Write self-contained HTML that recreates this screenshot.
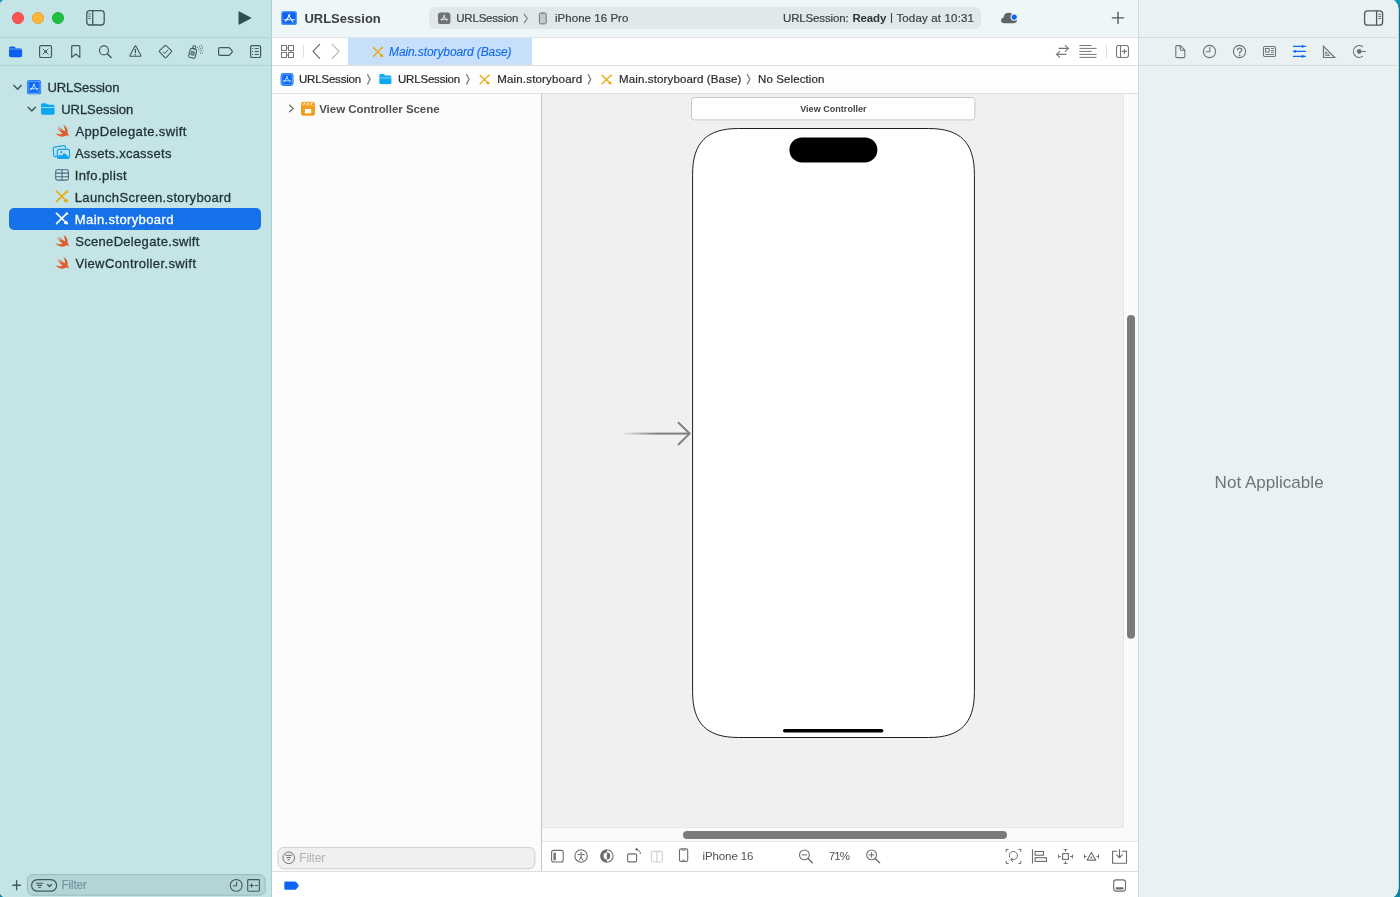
<!DOCTYPE html>
<html>
<head>
<meta charset="utf-8">
<title>Xcode</title>
<style>
html,body{margin:0;padding:0;}
html{width:1400px;height:897px;overflow:hidden;}
body{width:1400px;height:897px;overflow:hidden;background:linear-gradient(180deg,#0a9cbd 0,#07728f 16px,#07728f 880px,#0a8aa8 897px);font-family:"Liberation Sans",sans-serif;font-size:13px;color:#1f2d2f;position:relative;}
.abs{position:absolute;}
#clip{position:absolute;left:0;top:0;width:1398.5px;height:897px;overflow:hidden;clip-path:inset(-1.5px 0px -1.5px -1.5px round 10.5px);}
#win{position:absolute;left:0;top:0;width:1400px;height:897px;background:#fff;}
#win > div{position:absolute;}
.t{position:absolute;white-space:nowrap;line-height:16px;height:16px;}
svg{position:absolute;overflow:visible;}
#sidebar{left:0;top:0;width:271px;height:897px;background:#c5e4e6;}
#sbline{left:271px;top:0;width:1px;height:897px;background:#a9cfd2;}
#toolbar{left:272px;top:0;width:866px;height:37px;background:#eef6f8;}
#tbline{left:0;top:37px;width:1400px;height:1px;background:#d3dcde;}
#tbline2{left:272px;top:37px;width:866px;height:1px;background:#e3e3e3;}
#tabline2{left:272px;top:65px;width:866px;height:1px;background:#e1e1e1;}
#sbl1{left:0;top:37px;width:271px;height:1px;background:#b3d3d6;}
#sbl2{left:0;top:65px;width:271px;height:1px;background:#b3d3d6;}
#tabbar{left:272px;top:38px;width:866px;height:27px;background:#fff;}
#tabline{left:272px;top:65px;width:1127px;height:1px;background:#d6dee0;}
#jumpbar{left:272px;top:66px;width:866px;height:27px;background:#fdfdfd;}
#jumpline{left:272px;top:93px;width:866px;height:1px;background:#e0e0e0;}
#outline{left:272px;top:94px;width:269px;height:777px;background:#fcfcfc;}
#outlineline{left:541px;top:94px;width:1px;height:777px;background:#c4c4c4;}
#canvas{left:542px;top:94px;width:581px;height:733px;background:#f0f0f0;}
#vline{left:1123px;top:94px;width:1px;height:734px;background:#e6e6e6;}
#hline{left:542px;top:827px;width:582px;height:1px;background:#e6e6e6;}
#vtrack{left:1124px;top:94px;width:14px;height:747px;background:#fafafa;}
#htrack{left:542px;top:828px;width:596px;height:13px;background:#fafafa;}
#hline2{left:542px;top:841px;width:596px;height:1px;background:#e4e4e4;}
#canvasbar{left:542px;top:842px;width:596px;height:29px;background:#fff;}
#botline{left:272px;top:871px;width:866px;height:1px;background:#dedede;}
#botbar{left:272px;top:872px;width:866px;height:25px;background:#fff;}
#inspline{left:1138px;top:0;width:1px;height:897px;background:#d0dadc;}
#insp{left:1139px;top:0;width:261px;height:897px;background:#e9f1f3;}
#ov{left:0;top:0;will-change:transform;}
text{font-family:"Liberation Sans",sans-serif;}
</style>
</head>
<body>
<div id="clip"><div id="win">
  <div id="sidebar"></div>
  <div id="sbline"></div>
  <div id="toolbar"></div>
  <div id="tabbar"></div>
  <div id="jumpbar"></div>
  <div id="outline"></div>
  <div id="outlineline"></div>
  <div id="canvas"></div>
  <div id="vtrack"></div>
  <div id="htrack"></div>
  <div id="vline"></div>
  <div id="hline"></div>
  <div id="hline2"></div>
  <div id="canvasbar"></div>
  <div id="botbar"></div>
  <div id="insp"></div>
  <div id="inspline"></div>
  <div id="tbline"></div>
  <div id="tbline2"></div>
  <div id="sbl1"></div>
  <div id="sbl2"></div>
  <div id="tabline"></div>
  <div id="tabline2"></div>
  <div id="jumpline"></div>
  <div id="botline"></div>
  <svg id="ov" width="1400" height="897" viewBox="0 0 1400 897">
  <defs>
    <!-- app icon (blue) 15x15 -->
  <symbol id="appicon" viewBox="0 0 15 15">
    <rect x="0.1" y="0.1" width="14.8" height="14.8" rx="3.2" fill="#0b6df4"/>
    <rect x="1.3" y="1.3" width="12.4" height="12.4" rx="2.1" fill="none" stroke="#a8cdfc" stroke-width="0.72"/>
    <g stroke="#dcebfe" stroke-width="0.95" stroke-linecap="round" fill="none">
      <path d="M7.9 3.9l-3.7 6.5M6.9 4.6l3.7 6M3.3 9h4.6M9.8 9h1.9"/>
    </g>
  </symbol>
  <symbol id="appicon2" viewBox="0 0 16 14.2">
    <rect x="0.1" y="0.1" width="15.8" height="14" rx="2.6" fill="#4a92f6"/>
    <rect x="1.5" y="1.5" width="13" height="11.2" rx="1.6" fill="#0b61f0"/>
    <g stroke="#fff" stroke-width="1.05" stroke-linecap="round" fill="none">
      <path d="M8.8 3.5l-3 5.2M4.6 10.6l0.5-0.8M7.4 4.1l4.3 7M3.2 8.8h5.6M11 8.8h2.3"/>
    </g>
  </symbol>
  <!-- folder light blue 14x12 -->
  <symbol id="folder" viewBox="0 0 14 12">
    <path d="M0 1.8 Q0 0.1 1.7 0.1 L4.3 0.1 Q5.2 0.1 5.8 0.7 L6.4 1.3 Q6.9 1.8 7.8 1.8 L12.2 1.8 Q13.9 1.8 13.9 3.5 L13.9 10.2 Q13.9 11.9 12.2 11.9 L1.7 11.9 Q0 11.9 0 10.2Z" fill="#0aa8f1"/>
    <path d="M0 4.5h13.9" stroke="#c4e9f6" stroke-width="0.8"/>
  </symbol>
  <!-- swift 14x12 -->
  <symbol id="swift" viewBox="0 0 14 12">
    <path d="M7.7 0.1 C11 1.9 12.8 5.2 11.8 7.9 C12.6 9.1 13.6 10.6 13.3 11.9 C12.6 10.7 11.5 10.4 10.7 10.8 C8.9 11.9 6.3 12.2 3.9 11.2 C2.2 10.5 0.9 9.3 0.1 7.9 C2.2 9.4 4.9 9.9 7.1 8.9 C4.9 7.2 3.1 4.9 1.6 2.6 C3.3 4.1 5.3 5.5 6.9 6.5 C5.4 4.9 4 3 2.9 1.3 C5 3.2 7.3 5.2 9.5 6.7 C9.7 4.8 9 2.3 7.7 0.1Z" fill="#df5b29"/>
  </symbol>
  <!-- storyboard 13x12.5 -->
  <symbol id="sb" viewBox="0 0 13 12.5">
    <g stroke="currentColor" stroke-linecap="round" fill="none">
      <path d="M0.9 1l7.6 7.3" stroke-width="1.7"/>
      <path d="M11.5 1.2l-10.4 10.2" stroke-width="1.7"/>
      <path d="M11.2 0.7l1.1 1.1" stroke-width="1.5"/>
    </g>
    <path d="M0.3 12.3l0.6-1.9l1.3 1.3z" fill="currentColor"/>
    <path d="M8.6 9.6 Q9.4 8.2 10.8 8.6 Q12.6 9.4 12.8 12 Q10.4 12.6 9 11.6 Q8 10.8 8.6 9.6Z" fill="currentColor"/>
  </symbol>
<!--DEFS-->
  </defs>
    <g id="sidebar-g">
  <!-- traffic lights -->
  <circle cx="18" cy="18" r="5.6" fill="#ff5451" stroke="#e4403c" stroke-width="0.8"/>
  <circle cx="38" cy="18" r="5.6" fill="#feb53a" stroke="#e09e27" stroke-width="0.8"/>
  <circle cx="58" cy="18" r="5.6" fill="#1dc040" stroke="#17a834" stroke-width="0.8"/>
  <!-- sidebar toggle -->
  <g fill="none" stroke="#3e5a5d" stroke-width="1.3">
    <rect x="86.8" y="10.7" width="17.4" height="14.3" rx="3"/>
    <path d="M92.7 10.7v14.3"/>
    <path d="M88.3 13.9h2.4M88.3 16.2h2.4M88.3 18.5h2.4" stroke-width="0.9"/>
  </g>
  <!-- play -->
  <path d="M239.5 11.4 L250.9 17.5 Q251.7 18 250.9 18.5 L239.5 24.6 Q238.5 25 238.5 24 L238.5 12 Q238.5 11 239.5 11.4Z" fill="#2f4f52"/>
  <!-- nav icons -->
  <path d="M9 48.3 Q9 46.6 10.7 46.6 L13.6 46.6 Q14.5 46.6 15.1 47.2 L15.6 47.7 Q16.1 48.2 17 48.2 L20.4 48.2 Q22.1 48.2 22.1 49.9 L22.1 55.6 Q22.1 57.3 20.4 57.3 L10.7 57.3 Q9 57.3 9 55.6Z" fill="#0b60f2"/>
  <path d="M9 49h13.1" stroke="#c5e4e6" stroke-width="0.7" opacity="0.7"/>
  <g fill="none" stroke="#3e5a5d" stroke-width="1.2" stroke-linecap="round" stroke-linejoin="round">
    <rect x="39.6" y="45.6" width="11.9" height="11.9" rx="1.6"/>
    <path d="M42.9 48.9l5.4 5.4M48.3 48.9l-5.4 5.4" stroke-width="0.85"/>
    <path d="M71.7 46.6 Q71.7 45.6 72.7 45.6 L78.8 45.6 Q79.8 45.6 79.8 46.6 L79.8 57.4 L75.75 54 L71.7 57.4Z"/>
    <circle cx="104" cy="50.4" r="4.5"/>
    <path d="M107.3 53.8l3.7 3.7" stroke-width="1.5"/>
    <path d="M134.8 46.4 Q135.4 45.4 136 46.4 L140.8 55.2 Q141.3 56.3 140.1 56.3 L130.7 56.3 Q129.5 56.3 130 55.2Z" stroke-width="1.1"/>
    <path d="M135.4 49.3v3.4" stroke-width="1.2"/>
    <path d="M159.6 51.5 Q159 50.9 159.6 50.3 L164.9 45.3 Q165.5 44.8 166.1 45.3 L171.4 50.3 Q172 50.9 171.4 51.5 L166.1 57.4 Q165.5 58 164.9 57.4Z" transform="translate(0,0.3)" stroke-width="1.05"/>
    <path d="M163.2 51.9l1.6 1.5l3-3.3" stroke-width="1"/>
    <path d="M219.8 47.6 L228.6 47.6 Q229.3 47.6 229.8 48.1 L232.1 50.8 Q232.6 51.5 232.1 52.2 L229.8 54.9 Q229.3 55.4 228.6 55.4 L219.8 55.4 Q218.6 55.4 218.6 54.2 L218.6 48.8 Q218.6 47.6 219.8 47.6Z"/>
    <rect x="250.6" y="45.6" width="10" height="11.9" rx="1.6"/>
    <path d="M254.6 48.6h4.2M254.6 51.5h4.2M254.6 54.4h4.2" stroke-width="1" stroke-linecap="butt"/>
  </g>
  <circle cx="45.6" cy="51.6" r="1.4" fill="#3e5a5d"/>
  <circle cx="135.4" cy="54.7" r="0.75" fill="#3e5a5d"/>
  <g fill="#3e5a5d"><circle cx="252.6" cy="48.6" r="0.6"/><circle cx="252.6" cy="51.5" r="0.6"/><circle cx="252.6" cy="54.4" r="0.6"/></g>
  <!-- spray (debug) -->
  <g transform="translate(0.6,-0.6) rotate(14 192 53)" fill="none" stroke="#3e5a5d" stroke-width="1.05" stroke-linejoin="round">
    <path d="M189 51.2 Q189 49.4 190.6 49.2 L194 49.2 Q195.6 49.4 195.6 51.2 L195.6 57.2 Q195.6 58.4 194.4 58.4 L190.2 58.4 Q189 58.4 189 57.2Z"/>
    <rect x="191" y="46.2" width="2.6" height="3" rx="0.5" stroke-width="0.95"/>
    <rect x="190.7" y="52.2" width="3.2" height="3.4" stroke-width="0.7" fill="#3e5a5d" fill-opacity="0.55"/>
  </g>
  <g fill="#3e5a5d"><circle cx="197.5" cy="47.5" r="0.55"/><circle cx="199.4" cy="46.4" r="0.55"/><circle cx="201.5" cy="45.6" r="0.55"/><circle cx="198.6" cy="49" r="0.55"/><circle cx="200.5" cy="48.3" r="0.55"/><circle cx="202.4" cy="47.9" r="0.55"/><circle cx="200.1" cy="50.7" r="0.55"/><circle cx="201.8" cy="50.1" r="0.55"/><circle cx="200.5" cy="53.1" r="0.55"/><circle cx="202.4" cy="52.7" r="0.55"/></g>
  <!-- tree chevrons -->
  <g fill="none" stroke="#3e5a5d" stroke-width="1.5" stroke-linecap="round" stroke-linejoin="round">
    <path d="M14 85.4l3.6 3.8l3.6-3.8"/>
    <path d="M28.2 107.2l3.6 3.8l3.6-3.8"/>
  </g>
  <!-- selection -->
  <rect x="9" y="208" width="252" height="22" rx="5" fill="#1672eb"/>
  <!-- bottom filter -->
  <rect x="27.4" y="874.6" width="237.8" height="20.6" rx="5.5" fill="#b5d4d7" stroke="#94b8bc" stroke-width="0.9"/>
  <g fill="none" stroke="#3e5a5d" stroke-width="1.2" stroke-linecap="round">
    <path d="M12.8 885.2h7.7M16.6 880.7v9.1" stroke-width="1.35"/>
    <rect x="31.6" y="879.6" width="25" height="11.6" rx="5.8" stroke-width="1.2"/>
    <path d="M36.3 883.2h6.6M37.6 885.4h4M38.8 887.5h1.7" stroke-width="1.15"/>
    <path d="M47.5 884.5l2 2l2-2" stroke-width="1.25"/>
    <circle cx="236.2" cy="885.4" r="5.9" stroke-width="1.05"/>
    <path d="M236.6 881.9v3.8h-3.2" stroke-width="1.05"/>
    <rect x="247.7" y="879.6" width="11.7" height="11.6" rx="0.9" stroke-width="1.1"/>
    <path d="M249.6 885.5h4M251.6 883.5v4M254.8 885.5h3" stroke-width="1.15" stroke-linecap="butt"/>
  </g>
  <text x="61.5" y="889.3" font-size="12" fill="#729a9f" stroke="#729a9f" stroke-width="0.2" textLength="25.5">Filter</text>
  <!-- tree text -->
  <g font-size="13" fill="#1f3134" stroke="#1f3134" stroke-width="0.3">
    <text x="47.4" y="91.5" textLength="72">URLSession</text>
    <text x="61.2" y="113.5" textLength="72">URLSession</text>
    <text x="75.4" y="135.5" textLength="111">AppDelegate.swift</text>
    <text x="74.9" y="157.5" textLength="96.5">Assets.xcassets</text>
    <text x="74.7" y="179.5" textLength="52">Info.plist</text>
    <text x="74.8" y="201.5" textLength="156.2">LaunchScreen.storyboard</text>
    <text x="74.8" y="223.5" textLength="98.6" fill="#fff" stroke="#fff">Main.storyboard</text>
    <text x="75.2" y="245.5" textLength="124.2">SceneDelegate.swift</text>
    <text x="75.4" y="267.5" textLength="120.6">ViewController.swift</text>
  </g>
  </g>
  <g id="tree-icons">
    <use href="#appicon" x="26.8" y="80" width="14.6" height="14.6"/>
    <use href="#folder" x="41" y="103" width="13.8" height="11.9"/>
    <use href="#swift" x="55.3" y="124.3" width="14.3" height="12.8" preserveAspectRatio="none"/>
    <!-- assets -->
    <g fill="none" stroke="#14a4f0" stroke-width="1.2" stroke-linejoin="round">
      <path d="M56.8 156.4 L55.2 156.6 Q53.9 156.7 53.8 155.4 L53.2 148.6 Q53.1 147.3 54.4 147.1 L63.6 145.7 Q65 145.5 65.4 146.8 L65.8 148.6"/>
      <rect x="57.3" y="149.3" width="12.2" height="9.2" rx="1.8"/>
    </g>
    <path d="M57.6 156.6 L59.2 155 Q59.8 154.5 60.4 155 L61.3 155.8 L63.6 153.6 Q64.3 153 65 153.6 L69.2 157.2 L69.2 158.2 L57.6 158.2Z" fill="#14a4f0"/>
    <circle cx="61.3" cy="152.2" r="1.1" fill="#14a4f0"/>
    <!-- plist -->
    <g fill="none" stroke="#456b7b" stroke-width="1.1">
      <rect x="55.7" y="169.7" width="12.7" height="10.4" rx="1.8" fill="#cfe6ea"/>
      <path d="M55.7 173.1h12.7M55.7 176.7h12.7M62 169.7v10.4"/>
    </g>
    <use href="#sb" x="55.4" y="190.2" width="13" height="12.5" color="#e9ab14"/>
    <use href="#sb" x="55.4" y="212.2" width="13" height="12.5" color="#ffffff"/>
    <use href="#swift" x="55.3" y="234.3" width="14.3" height="12.8" preserveAspectRatio="none"/>
    <use href="#swift" x="55.3" y="256.3" width="14.3" height="12.8" preserveAspectRatio="none"/>
  </g>

    <g id="toolbar-g">
    <use href="#appicon2" x="281" y="10.9" width="16.1" height="14.2"/>
    <text x="304.4" y="22.9" font-size="13" font-weight="bold" fill="#3b3e3f" textLength="76.4">URLSession</text>
    <!-- activity pill -->
    <rect x="429" y="7" width="552" height="22" rx="6" fill="#e0e8ea"/>
    <rect x="438" y="12.4" width="12.4" height="11.6" rx="2.6" fill="#6f7374"/>
    <g stroke="#eef2f3" stroke-width="0.9" stroke-linecap="round" fill="none"><path d="M444.8 15.3l-2.9 5M443.7 15.8l3 4.8M440.9 19.3h3.8M446.2 19.3h1.4"/></g>
    <g font-size="11.5" fill="#3a4244" stroke="#3a4244" stroke-width="0.2">
      <text x="456.2" y="21.8" textLength="62.2">URLSession</text>
      <text x="555" y="21.8" textLength="73.4">iPhone 16 Pro</text>
      <text x="783" y="21.8" textLength="65.6">URLSession:</text>
      <text x="852.4" y="21.8" textLength="34" font-weight="bold" fill="#2e3436" stroke="none">Ready</text>
      <text x="890" y="21.4" textLength="3">|</text>
      <text x="896.4" y="21.8" textLength="77.6">Today at 10:31</text>
    </g>
    <path d="M524.3 14.3l3 4.2l-3 4.2" fill="none" stroke="#737a7c" stroke-width="1.15" stroke-linecap="round" stroke-linejoin="round"/>
    <!-- phone icon -->
    <rect x="539.4" y="12.9" width="6.8" height="11" rx="1.4" fill="#c3c9ca" stroke="#6f7678" stroke-width="1"/>
    <path d="M541.8 13.6h2" stroke="#6f7678" stroke-width="0.9"/>
    <!-- cloud -->
    <path d="M1004.6 23.2 Q1001 23.2 1001 20.2 Q1001 17.8 1003.6 17.4 Q1004 13 1008.6 12.8 Q1012.4 12.8 1013.6 16.2 Q1017 16.6 1017 19.8 Q1017 23.2 1013.4 23.2Z" fill="#5f6668"/>
    <circle cx="1014.2" cy="17.1" r="3.7" fill="#eef6f8"/>
    <circle cx="1014.2" cy="17.1" r="2.6" fill="#1267f0"/>
    <!-- plus -->
    <path d="M1112.4 17.9h11.2M1118 12.3v11.2" stroke="#545b5d" stroke-width="1.4" stroke-linecap="round"/>
    <!-- inspector toggle -->
    <g fill="none" stroke="#4e5759" stroke-width="1.3">
      <rect x="1364.6" y="10.8" width="18" height="14.4" rx="3"/>
      <path d="M1376.6 10.8v14.4"/>
      <path d="M1378.4 14.3h2.6M1378.4 16.4h2.6M1378.4 18.5h2.6" stroke-width="0.9"/>
    </g>
  </g>

    <g id="tabbar-g">
    <rect x="348" y="38" width="184" height="27" fill="#c8dffb"/>
    <!-- grid icon -->
    <g fill="none" stroke="#777" stroke-width="1" stroke-linejoin="miter">
      <rect x="281.5" y="45.5" width="5" height="5"/><rect x="288.5" y="45.5" width="5" height="5"/>
      <rect x="281.5" y="52.5" width="5" height="5"/><rect x="288.5" y="52.5" width="5" height="5"/>
      <path d="M286.5 48h2M291 50.5v2M286.5 55h2"/>
    </g>
    <path d="M303.4 44.8v12.6" stroke="#dcdcdc" stroke-width="1"/>
    <path d="M319.6 44.4l-6.6 7l6.6 7" fill="none" stroke="#737373" stroke-width="1.35" stroke-linecap="round" stroke-linejoin="round"/>
    <path d="M332.4 44.4l6.6 7l-6.6 7" fill="none" stroke="#b8b8b8" stroke-width="1.35" stroke-linecap="round" stroke-linejoin="round"/>
    <use href="#sb" x="372.4" y="46.4" width="11.2" height="10.8" color="#e9ab14"/>
    <text x="389" y="55.8" font-size="12" font-style="italic" fill="#0f6aee" stroke="#0f6aee" stroke-width="0.12" textLength="122.6">Main.storyboard (Base)</text>
    <!-- right icons -->
    <g fill="none" stroke="#767676" stroke-width="1.1" stroke-linecap="round" stroke-linejoin="round">
      <path d="M1059 48.4h9.4M1065.2 45.4l3.3 3l-3.3 3M1066 54.4h-9.4M1059.8 51.4l-3.3 3l3.3 3"/>
      <path d="M1079.4 45.5h12.2M1079.4 48.4h17.2M1079.4 51.4h12.2M1079.4 54.4h17.2M1079.4 57.4h17.2" stroke-width="1" stroke-linecap="butt"/>
      <rect x="1116.5" y="45.5" width="12" height="12" rx="2.4"/>
      <path d="M1120.5 45.5v12M1122.2 51.4h4.4M1124.4 49.2v4.4"/>
    </g>
    <path d="M1106.4 45v12.6" stroke="#dcdcdc" stroke-width="1"/>
  </g>

    <g id="jumpbar-g">
    <use href="#appicon" x="280.1" y="72.9" width="13.9" height="13.1" preserveAspectRatio="none"/>
    <use href="#folder" x="378.6" y="74" width="13.6" height="10.4"/>
    <use href="#sb" x="479.2" y="74.4" width="10.8" height="10.2" color="#e9ab14"/>
    <use href="#sb" x="601.2" y="74.4" width="10.8" height="10.2" color="#e9ab14"/>
    <g font-size="11.5" fill="#272b2c" stroke="#272b2c" stroke-width="0.2">
      <text x="299" y="82.8" textLength="62.2">URLSession</text>
      <text x="398" y="82.8" textLength="62.2">URLSession</text>
      <text x="497.2" y="82.8" textLength="85">Main.storyboard</text>
      <text x="619" y="82.8" textLength="122.4">Main.storyboard (Base)</text>
      <text x="758" y="82.8" textLength="66.4">No Selection</text>
    </g>
    <g fill="none" stroke="#828282" stroke-width="1.4" stroke-linecap="round" stroke-linejoin="round">
      <path d="M367.7 74.7l2.4 4.6l-2.4 4.6"/>
      <path d="M466.7 74.7l2.4 4.6l-2.4 4.6"/>
      <path d="M588.3 74.7l2.4 4.6l-2.4 4.6"/>
      <path d="M747.5 74.7l2.4 4.6l-2.4 4.6"/>
    </g>
  </g>

    <g id="outline-g">
    <path d="M289.6 105.2l3.6 3.3l-3.6 3.3" fill="none" stroke="#6c6c6c" stroke-width="1.3" stroke-linecap="round" stroke-linejoin="round"/>
    <!-- scene icon -->
    <rect x="301" y="101.8" width="14" height="14" rx="2.4" fill="#f39d1b"/>
    <path d="M302.4 104.7l2-2.2h1.7l-2 2.2zM306 104.7l2-2.2h1.7l-2 2.2zM309.6 104.7l2-2.2h1.7l-2 2.2z" fill="#fff3dd"/>
    <path d="M301 105.7h14" stroke="#f8bd62" stroke-width="0.6"/>
    <rect x="305" y="108.9" width="6.2" height="4.4" fill="#fff"/>
    <text x="319.2" y="113" font-size="11.5" font-weight="bold" fill="#515151" textLength="120.4">View Controller Scene</text>
    <!-- filter box -->
    <rect x="277.9" y="847.4" width="257" height="21.4" rx="6" fill="#f0f0f0" stroke="#cbcbcb" stroke-width="0.9"/>
    <circle cx="288.7" cy="857.8" r="5.8" fill="none" stroke="#747474" stroke-width="1"/>
    <path d="M285.7 855.3h6M286.9 857.5h3.6M288 859.7h1.4" stroke="#6e6e6e" stroke-width="1.1" stroke-linecap="round"/>
    <text x="299.2" y="862" font-size="12" fill="#b2b2b2" textLength="26">Filter</text>
    <!-- tag -->
    <path d="M285.6 881.4 L294.8 881.4 Q295.6 881.4 296.2 882 L298.4 884.8 Q298.9 885.6 298.4 886.4 L296.2 889.2 Q295.6 889.8 294.8 889.8 L285.6 889.8 Q284.3 889.8 284.3 888.5 L284.3 882.7 Q284.3 881.4 285.6 881.4Z" fill="#0b65f2"/>
    <!-- bottom-right panel icon -->
    <rect x="1113.7" y="879.9" width="11.8" height="11.2" rx="2.4" fill="none" stroke="#6c6c6c" stroke-width="1.1"/>
    <rect x="1115.6" y="887.2" width="8" height="2.2" rx="0.8" fill="#6c6c6c"/>
  </g>

    <g id="canvas-g">
    <linearGradient id="arrg" x1="621" y1="0" x2="656" y2="0" gradientUnits="userSpaceOnUse">
      <stop offset="0" stop-color="#808080" stop-opacity="0"/>
      <stop offset="1" stop-color="#808080" stop-opacity="1"/>
    </linearGradient>
    <rect x="691.5" y="97.5" width="283.4" height="22.4" rx="3" fill="#fff" stroke="#c6c6c6" stroke-width="1"/>
    <text x="800.2" y="112" font-size="9" font-weight="bold" fill="#434343" textLength="66.4">View Controller</text>
    <!-- phone -->
    <path d="M738.6 128.5 L928.4 128.5 C960.4 128.5 974.4 142.5 974.4 174.5 L974.4 691.5 C974.4 723.5 960.4 737.5 928.4 737.5 L738.6 737.5 C706.6 737.5 692.6 723.5 692.6 691.5 L692.6 174.5 C692.6 142.5 706.6 128.5 738.6 128.5Z" fill="#fff" stroke="#1e1e1e" stroke-width="1"/>
    <rect x="789.4" y="137.4" width="88" height="25" rx="12.5" fill="#000"/>
    <rect x="783" y="728.9" width="100.4" height="3.5" rx="1.7" fill="#000"/>
    <!-- entry arrow -->
    <rect x="621" y="432.6" width="68" height="2" fill="url(#arrg)"/>
    <path d="M678 422.2l11.6 11.4l-11.6 11.4" fill="none" stroke="#808080" stroke-width="2"/>
    <!-- scroll thumbs -->
    <rect x="1127" y="315" width="8" height="323.8" rx="4" fill="#7b7b7b"/>
    <rect x="683" y="831" width="324" height="8" rx="4" fill="#7b7b7b"/>
  </g>

    <g id="canvasbar-g" fill="none" stroke="#6c6c6c" stroke-width="1.1" stroke-linecap="round" stroke-linejoin="round">
    <!-- outline toggle -->
    <rect x="551.6" y="850.4" width="11.6" height="11.6" rx="2"/>
    <rect x="553.4" y="852.5" width="2.5" height="8" rx="0.9" fill="#747474" stroke="none"/>
    <!-- accessibility -->
    <circle cx="581.1" cy="856" r="6.2"/>
    <circle cx="581.1" cy="852.8" r="0.9" fill="#6c6c6c" stroke="none"/>
    <path d="M577.8 854.6h6.6M581.1 854.8v2.6M581.1 857.2l-1.8 3M581.1 857.2l1.8 3" stroke-width="1"/>
    <!-- appearance -->
    <circle cx="606.9" cy="856" r="6.2"/>
    <path d="M606.9 849.8 A6.2 6.2 0 0 0 606.9 862.2 L606.9 859.4 A3.4 3.4 0 0 1 606.9 852.6Z" fill="#6c6c6c" stroke="none"/>
    <path d="M606.9 852.6 A3.4 3.4 0 0 1 606.9 859.4Z" fill="#6c6c6c" stroke="none"/>
    <!-- orientation -->
    <rect x="627.6" y="853.9" width="9" height="8" rx="1.3"/>
    <path d="M640.4 853.6 Q640.4 849.8 636.4 849.4" stroke-width="1"/>
    <path d="M634.8 849.3l2.6-1.9v3.8z" fill="#6c6c6c" stroke="none"/>
    <!-- split (disabled) -->
    <g stroke="#d0d0d0"><rect x="651.4" y="851.4" width="11" height="10.6" rx="1.8"/><path d="M656.9 851.4v10.6"/></g>
    <!-- device -->
    <rect x="679.5" y="848.9" width="8.2" height="12.6" rx="1.6"/>
    <path d="M682 850.1h3.2M682.2 860.2h2.8" stroke-width="0.9"/>
    <!-- zoom out -->
    <circle cx="804.4" cy="854.9" r="4.9"/>
    <path d="M808 858.6l4.4 4.2" stroke-width="1.4"/>
    <path d="M802 854.9h4.8" stroke-width="1"/>
    <!-- zoom in -->
    <circle cx="871.6" cy="854.9" r="4.9"/>
    <path d="M875.2 858.6l4.4 4.2" stroke-width="1.4"/>
    <path d="M869.2 854.9h4.8M871.6 852.5v4.8" stroke-width="1"/>
    <!-- update frames -->
    <path d="M1008.6 849.4h-2.4v2.6M1018.4 849.4h2.4v2.6M1008.6 863.5h-2.4v-2.6M1018.4 863.5h2.4v-2.6" stroke-width="1" stroke-linecap="butt" stroke-linejoin="miter"/>
    <path d="M1009.5 857 A4.1 4.1 0 1 1 1014.2 859.6 L1010.9 859.7M1012.6 857.9l-1.8 1.8l1.8 1.9" stroke-width="1"/>
    <!-- align -->
    <path d="M1032.5 849.3v14.2" stroke-linecap="butt"/>
    <rect x="1035.1" y="851.5" width="8.4" height="3.7" stroke-linejoin="miter"/>
    <rect x="1035.1" y="857.7" width="11.4" height="3.7" stroke-linejoin="miter"/>
    <!-- pin -->
    <rect x="1062.6" y="853.6" width="5.8" height="5.8" stroke-linejoin="miter"/>
    <path d="M1065.5 849.6v2.2M1063.6 849.6h3.8M1065.5 863.4v-2.2M1063.6 863.4h3.8M1058.6 856.5h2.2M1058.6 854.6v3.8M1072.4 856.5h-2.2M1072.4 854.6v3.8" stroke-width="1" stroke-linecap="butt"/>
    <!-- resolve -->
    <path d="M1091.4 852.6l4.3 7.5h-8.6z"/>
    <circle cx="1091.4" cy="857.5" r="1.05" fill="#6c6c6c" stroke="none"/>
    <path d="M1084.5 856.5h2M1084.5 854.6v3.8M1098.5 856.5h-2M1098.5 854.6v3.8" stroke-width="1" stroke-linecap="butt"/>
    <!-- embed -->
    <path d="M1117.2 851.3h-4.6v11.9h13.9v-11.9h-4.6" stroke-linejoin="miter" stroke-linecap="butt"/>
    <path d="M1119.5 849.5v8M1116.7 854.8l2.8 2.9l2.8-2.9"/>
  </g>
  <g font-size="11.5" fill="#505050">
    <text x="702.6" y="860" textLength="50.8">iPhone 16</text>
    <text x="828.8" y="860" textLength="21.2">71%</text>
  </g>

    <g id="insp-g" fill="none" stroke="#6e7475" stroke-width="1.1" stroke-linecap="round" stroke-linejoin="round">
    <!-- file -->
    <path d="M1177 45.6 L1180.2 45.6 L1184.8 50.2 L1184.8 56.4 Q1184.8 57.6 1183.6 57.6 L1177 57.6 Q1175.8 57.6 1175.8 56.4 L1175.8 46.8 Q1175.8 45.6 1177 45.6Z"/>
    <path d="M1180.2 45.8v3.2q0 1.2 1.2 1.2h3.2"/>
    <!-- history -->
    <circle cx="1209.5" cy="51.5" r="6.1"/>
    <path d="M1209.8 47.6v4.2h-3.6"/>
    <!-- help -->
    <circle cx="1239.5" cy="51.5" r="6.1"/>
    <path d="M1237.5 50 Q1237.5 48.1 1239.6 48.1 Q1241.7 48.1 1241.7 49.9 Q1241.7 51 1240.4 51.7 Q1239.6 52.2 1239.6 53.2" stroke-width="1.3"/>
    <circle cx="1239.6" cy="55.3" r="0.85" fill="#6e7475" stroke="none"/>
    <!-- identity -->
    <rect x="1263.5" y="46.5" width="12" height="10" rx="1.4"/>
    <rect x="1265.5" y="48.5" width="3.6" height="3.6" stroke-width="1" stroke-linejoin="miter"/>
    <path d="M1271 48.5h3M1271 50.4h3M1271 52.3h3M1265.2 54.5h8.8" stroke-width="0.9" stroke-linecap="butt"/>
    <!-- attributes (selected) -->
    <g stroke="#1169f5" stroke-width="1.15" stroke-linecap="butt">
      <path d="M1292.9 46.4h13.1M1292.9 51.4h13.1M1292.9 56.4h13.1"/>
    </g>
    <g fill="#1169f5" stroke="none">
      <path d="M1300.9 46.4L1302.6 44.7L1304.3 46.4L1302.6 48.1Z"/><path d="M1293.5 51.4L1295.2 49.7L1296.9 51.4L1295.2 53.1Z"/><path d="M1300.9 56.4L1302.6 54.7L1304.3 56.4L1302.6 58.1Z"/>
    </g>
    <!-- size -->
    <path d="M1323.5 46.3 L1334.7 57.5 L1323.5 57.5Z" stroke-width="1.2" stroke-linejoin="miter"/>
    <path d="M1326.1 52 L1329.6 55.4 L1326.1 55.4Z" stroke-width="0.95" stroke-linejoin="miter"/>
    <!-- connections -->
    <path d="M1362.6 46.6 A5.9 5.9 0 1 0 1362.6 56.4"/>
    <circle cx="1359.2" cy="51.5" r="2.4" fill="#6e7475" stroke="none"/>
    <path d="M1359.2 51.5h6.4" stroke-width="1.2"/>
  </g>
  <text x="1214.6" y="487.9" font-size="17" fill="#6f7475" textLength="109">Not Applicable</text>

  </svg>
</div></div>
</body>
</html>
